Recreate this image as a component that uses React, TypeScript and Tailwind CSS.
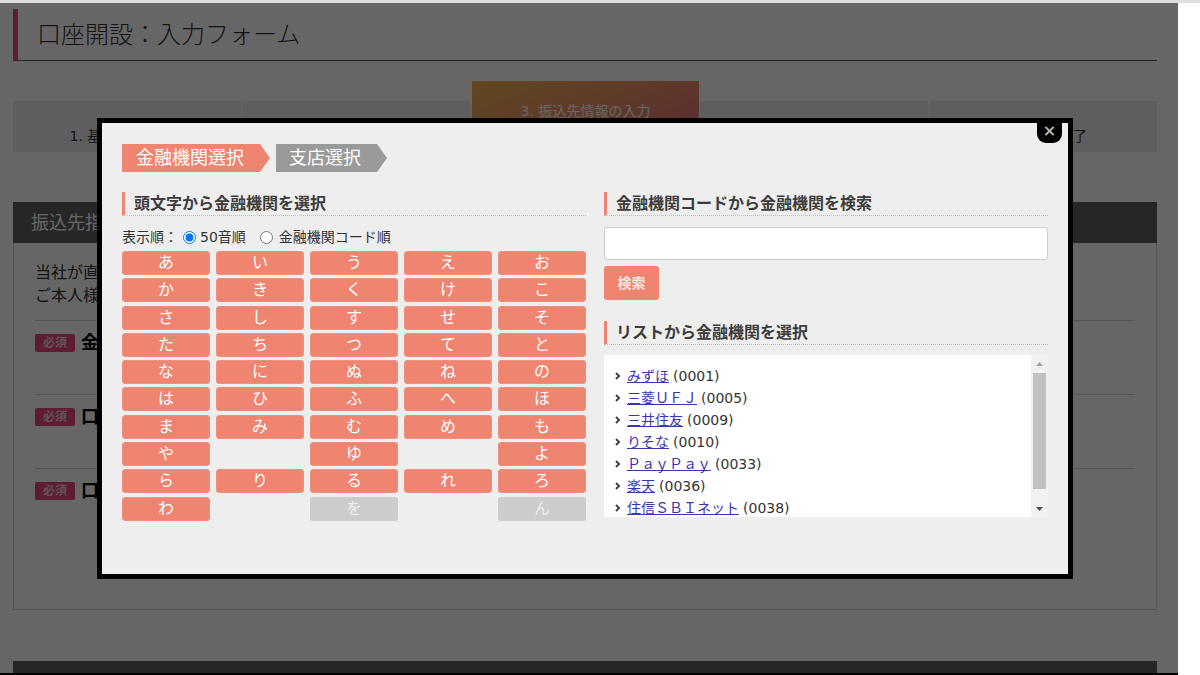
const KANA_ROWS: (string | null | { label: string; disabled: true })[][] = [
  ['あ', 'い', 'う', 'え', 'お'],
  ['か', 'き', 'く', 'け', 'こ'],
  ['さ', 'し', 'す', 'せ', 'そ'],
  ['た', 'ち', 'つ', 'て', 'と'],
  ['な', 'に', 'ぬ', 'ね', 'の'],
  ['は', 'ひ', 'ふ', 'へ', 'ほ'],
  ['ま', 'み', 'む', 'め', 'も'],
  ['や', null, 'ゆ', null, 'よ'],
  ['ら', 'り', 'る', 'れ', 'ろ'],
  ['わ', null, { label: 'を', disabled: true }, null, { label: 'ん', disabled: true }],
];

const BANKS = [
  { name: 'みずほ', code: '0001' },
  { name: '三菱ＵＦＪ', code: '0005' },
  { name: '三井住友', code: '0009' },
  { name: 'りそな', code: '0010' },
  { name: 'ＰａｙＰａｙ', code: '0033' },
  { name: '楽天', code: '0036' },
  { name: '住信ＳＢＩネット', code: '0038' },
];

const STEPS = ['1. 基本情報の入力', '2. 本人確認書類', '3. 振込先情報の入力', '4. 入力内容の確認', '5. 申込み完了'];

function SectionHeading({ children }: { children: React.ReactNode }) {
  return (
    <div className="border-b border-dotted border-[#bdbdbd]">
      <div className="border-l-[3px] border-[#ef8470] pl-[9px] text-[16px] font-bold leading-[23px] text-[#3c3c3c]">
        {children}
      </div>
    </div>
  );
}

function FormRow({ label }: { label: string }) {
  return (
    <div className="flex h-[74px] items-start gap-[6px] border-t border-[#d0d0d0] pt-[13px]">
      <span className="flex h-[18px] w-[40px] items-center justify-center rounded-[2px] bg-[#e8477a] text-[12px] font-bold text-[#f4d0dc]">必須</span>
      <span className="text-[18px] font-bold leading-[18px] text-black">{label}</span>
    </div>
  );
}

function BackgroundPage() {
  return (
    <div className="pl-[13px] pr-[21px] pt-[6px]">
      <div className="flex h-[52px] items-center border-b border-l-[5px] border-b-[#555] border-l-[#e8477a] pl-[19px]">
        <h1 className="text-[24px] font-light text-[#333]">口座開設：入力フォーム</h1>
      </div>

      <div className="mt-[40px] grid h-[51px] grid-cols-5 bg-[#ebebeb]">
        {STEPS.map((step, i) => (
          i === 2 ? (
            <div
              key={step}
              className="-mt-[20px] flex h-[91px] justify-center border-l border-white bg-gradient-to-br from-[#f6b34c] to-[#e05a7d] pt-[20px] text-[14px] leading-[20px] text-white"
            >
              {step}
            </div>
          ) : (
            <div
              key={step}
              className={`flex items-center justify-center text-[14px] text-[#333] ${i > 0 ? 'border-l border-white' : ''}`}
            >
              {step}
            </div>
          )
        ))}
      </div>

      <div className="mt-[50px]">
        <div className="flex h-[41px] items-center bg-[#606060] pl-[18px] text-[18px] text-white">振込先指定口座</div>
        <div className="h-[367px] border border-t-0 border-[#cfcfcf] px-[21px] pt-[18px]">
          <p className="text-[16px] leading-[23px] text-[#333]">
            当社が直接お客様の口座にお振込みいたしますので、<br />
            ご本人様名義の口座をご登録ください。
          </p>
          <div className="mt-[13px]">
            <FormRow label="金融機関" />
            <FormRow label="口座種別" />
            <FormRow label="口座番号" />
          </div>
        </div>
      </div>

      <div className="mt-[51px] h-[20px] bg-[#606060]" />
    </div>
  );
}

function ListScrollbar() {
  return (
    <div className="flex w-[17px] flex-col items-center bg-[#f1f1f1]">
      <div className="flex h-[17px] items-center justify-center">
        <svg width="7" height="4" viewBox="0 0 7 4"><path d="M3.5 0L7 4H0z" fill="#a3a3a3" /></svg>
      </div>
      <div className="mt-[1px] h-[116px] w-[13px] bg-[#c1c1c1]" />
      <div className="flex-1" />
      <div className="flex h-[17px] items-center justify-center">
        <svg width="7" height="4" viewBox="0 0 7 4"><path d="M0 0h7L3.5 4z" fill="#505050" /></svg>
      </div>
    </div>
  );
}

function BankModal() {
  return (
    <div className="absolute left-[97px] top-[115px] h-[461px] w-[976px] border-[5px] border-black bg-[#eeeeee] px-[20px] pt-[21px]">
      <button className="absolute -top-[5px] right-[6px] flex h-[25px] w-[25px] items-center justify-center rounded-b-[9px] bg-black text-[16px] font-bold leading-none text-[#b8b8b8]">
        ×
      </button>

      <div className="flex gap-[6px]">
        <div className="h-[28px] w-[148px] bg-[#ef8470] pl-[14px] text-[18px] leading-[28px] text-white [clip-path:polygon(0_0,calc(100%-10px)_0,100%_50%,calc(100%-10px)_100%,0_100%)]">
          金融機関選択
        </div>
        <div className="h-[28px] w-[111px] bg-[#9a9a9a] pl-[13px] text-[18px] leading-[28px] text-white [clip-path:polygon(0_0,calc(100%-10px)_0,100%_50%,calc(100%-10px)_100%,0_100%)]">
          支店選択
        </div>
      </div>

      <div className="mt-[20px] grid grid-cols-[464px_444px] gap-x-[18px]">
        <div>
          <SectionHeading>頭文字から金融機関を選択</SectionHeading>
          <div className="mt-[12px] flex h-[18px] items-center text-[14px] text-[#333]">
            <span>表示順：</span>
            <label className="ml-[5px] flex items-center gap-[4px]">
              <input type="radio" name="order" defaultChecked className="m-0 h-[13px] w-[13px]" />
              50音順
            </label>
            <label className="ml-[14px] flex items-center gap-[6px]">
              <input type="radio" name="order" className="m-0 h-[13px] w-[13px]" />
              金融機関コード順
            </label>
          </div>
          <div className="mt-[5px] grid grid-cols-5 gap-x-[6px] gap-y-[3.3px]">
            {KANA_ROWS.flat().map((cell, i) => {
              if (cell === null) {
                return <div key={i} className="h-[24px]" />;
              }
              if (typeof cell === 'string') {
                return (
                  <button
                    key={i}
                    className="h-[24px] rounded-[3px] border border-[#f0917f] bg-[#ef8470] text-[16px] leading-none text-white"
                  >
                    {cell}
                  </button>
                );
              }
              return (
                <button
                  key={i}
                  disabled
                  className="h-[24px] rounded-[3px] bg-[#cccccc] text-[16px] leading-none text-[#efefef]"
                >
                  {cell.label}
                </button>
              );
            })}
          </div>
        </div>

        <div>
          <SectionHeading>金融機関コードから金融機関を検索</SectionHeading>
          <input
            type="text"
            className="mt-[11px] block h-[33px] w-full rounded-[3px] border border-[#cccccc] bg-white px-[8px] text-[14px] outline-none"
          />
          <button className="mt-[6px] h-[34px] w-[55px] rounded-[3px] bg-[#ef8470] text-[14px] font-bold text-[#fbe3de]">検索</button>
          <div className="mt-[21px]">
            <SectionHeading>リストから金融機関を選択</SectionHeading>
          </div>
          <div className="mt-[10px] flex h-[162px] bg-white">
            <ul className="flex-1 overflow-hidden pl-[11px] pt-[10px] text-[14px] leading-[22px] text-[#333]">
              {BANKS.map((bank) => (
                <li key={bank.code} className="flex items-center">
                  <svg width="6" height="8" viewBox="0 0 6 8" className="mr-[6px]">
                    <path d="M1 1l3 3-3 3" fill="none" stroke="#444" strokeWidth="2" />
                  </svg>
                  <a href="#" className="text-[#3a34b0] underline">{bank.name}</a>
                  <span className="ml-[4px]">({bank.code})</span>
                </li>
              ))}
            </ul>
            <ListScrollbar />
          </div>
        </div>
      </div>
    </div>
  );
}

export default function App() {
  return (
    <div className="flex h-[675px] w-[1200px] flex-col overflow-hidden bg-white font-['DejaVu_Sans','Noto_Sans_CJK_JP',sans-serif]">
      <div className="h-[3px] bg-[#dedede]" />
      <div className="relative h-[670px] w-[1178px] overflow-hidden bg-white">
        <BackgroundPage />
        <div className="absolute inset-0 bg-black/60" />
        <BankModal />
      </div>
      <div className="h-[2px] w-[1178px] bg-black" />
    </div>
  );
}
